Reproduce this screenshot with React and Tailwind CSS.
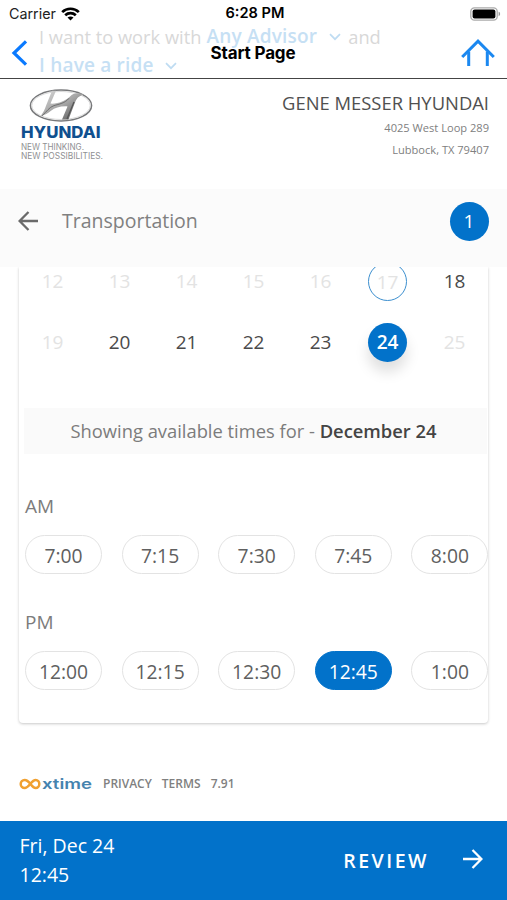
import { useState } from 'react';
import clsx from 'clsx';

const WEEKS = [
  [12, 13, 14, 15, 16, 17, 18],
  [19, 20, 21, 22, 23, 24, 25],
];
const OPEN_DAYS = [18, 20, 21, 22, 23, 24];
const TODAY = 17;

const TIMES = [
  { label: 'AM', slots: ['7:00', '7:15', '7:30', '7:45', '8:00'] },
  { label: 'PM', slots: ['12:00', '12:15', '12:30', '12:45', '1:00'] },
];

function WifiIcon() {
  return (
    <svg width="19" height="14" viewBox="0 0 19 14" fill="none" stroke="#000" strokeWidth="2.7">
      <path d="M1.2 5.1C5.8.6 13.2.6 17.8 5.1" />
      <path d="M4.2 8.3c3-2.8 7.6-2.8 10.6 0" />
      <path d="M9.5 13.6 6.5 10.6c1.7-1.5 4.3-1.5 6 0Z" fill="#000" stroke="none" />
    </svg>
  );
}

function BatteryIcon() {
  return (
    <svg width="31" height="14" viewBox="0 0 31 14">
      <rect x=".8" y=".8" width="26.4" height="12.4" rx="3.6" fill="#fff" stroke="#aaa" strokeWidth="1.3" />
      <rect x="2.6" y="2.5" width="22.8" height="9" rx="2" fill="#000" />
      <path d="M28.6 4.8c2 .6 2 3.8 0 4.4Z" fill="#999" />
    </svg>
  );
}

function ChevronDown() {
  return (
    <svg width="12" height="8" viewBox="0 0 12 8" fill="none" stroke="#bfdcf2" strokeWidth="1.7">
      <path d="m1 1.2 5 5 5-5" />
    </svg>
  );
}

function HomeIcon() {
  return (
    <svg width="34" height="28" viewBox="0 0 34 28" fill="none" stroke="#1b88f0" strokeWidth="3">
      <path d="M1.2 18 17 2.2 32.8 18" />
      <path d="M7.7 12.5V27M26.3 12.5V27" />
    </svg>
  );
}

function HyundaiLogo() {
  return (
    <svg width="86" height="76" viewBox="0 0 86 76">
      <defs>
        <linearGradient id="chrome" x1="0" y1="0" x2="1" y2="1">
          <stop offset="0" stopColor="#d9d9d9" />
          <stop offset=".5" stopColor="#a5a5a5" />
          <stop offset="1" stopColor="#4c4c4c" />
        </linearGradient>
      </defs>
      <ellipse cx="41" cy="17.5" rx="30.6" ry="15.4" fill="#fff" stroke="#77787a" strokeWidth="1.5" />
      <ellipse cx="41" cy="17.5" rx="29.2" ry="14" fill="none" stroke="#c9c9c9" strokeWidth=".7" />
      <path
        d="M32 2.8h4L30.5 15.6c8 .4 15-2.6 19.500-7 3.500-3.400 7.500-4.200 14-2-5 1.400-7.300 3.700-8.800 7.500L48.500 31.600h-6.500l5.500-13.200c-7-.4-12.500 1.400-16.500 4.400-3 2.400-6.300 4.200-10.500 5.400 2.800-3.800 4.400-7 5.600-10.800Z"
        fill="url(#chrome)"
      />
      <path d="M22 27.800c5-4.300 7-8.600 12-10.200 5-1.500 11-2.300 15-7.300" fill="none" stroke="#666" strokeWidth=".9" />
      <path d="m54 14-7 17" stroke="#555" strokeWidth="1.3" />
      <text x="1" y="50" textLength="79.5" lengthAdjust="spacingAndGlyphs" fontFamily="Inter, sans-serif" fontSize="16" fontWeight="800" fill="#10508f">
        HYUNDAI
      </text>
      <text x="1" y="61.5" textLength="63" lengthAdjust="spacingAndGlyphs" fontFamily="Inter, sans-serif" fontSize="8.4" fill="#8f9092">
        NEW THINKING.
      </text>
      <text x="1" y="71" textLength="82" lengthAdjust="spacingAndGlyphs" fontFamily="Inter, sans-serif" fontSize="8.4" fill="#8f9092">
        NEW POSSIBILITIES.
      </text>
    </svg>
  );
}

function XtimeLogo() {
  return (
    <svg width="74" height="20" viewBox="0 0 74 20">
      <path
        d="M11.5 10C9.3 7.2 7.8 6 5.7 6a4 4 0 0 0 0 8c4.5 0 6.5-8 11-8a3.600 4 0 0 1 0 8c-2.100 0-3.200-1.300-5.200-4Z"
        fill="none"
        stroke="#f0a030"
        strokeWidth="2.5"
      />
      <text x="23" y="15" textLength="50" lengthAdjust="spacingAndGlyphs" fontFamily="Inter, sans-serif" fontSize="14.5" fontWeight="600" fill="#4583ae">
        xtime
      </text>
    </svg>
  );
}

function NavHeader() {
  return (
    <header className="relative h-[79px] shrink-0 border-b-[1.5px] border-[#444] font-[Inter,sans-serif]">
      {/* page content showing through the translucent bar */}
      <div className="absolute left-[39px] top-[22px] font-['Open_Sans',sans-serif] text-[18.3px] leading-[29px] text-[#d8d8d8]">
        <div className="flex items-center whitespace-nowrap">
          <span>I want to work with</span>
          <span className="ml-[5px] text-[19px] font-semibold tracking-[0.2px] text-[#c6e0f4]">Any Advisor</span>
          <span className="ml-3 mr-[7px]"><ChevronDown /></span>
          <span>and</span>
        </div>
        <div className="flex items-center text-[19px] font-semibold tracking-[0.2px] text-[#c6e0f4]">
          <span>I have a ride</span>
          <span className="ml-[11px]"><ChevronDown /></span>
        </div>
      </div>
      <div className="relative grid h-[27px] grid-cols-3 items-center pl-[9px] pr-[6px]">
        <div className="flex items-center gap-[5px] text-[14.3px] text-[#222]">
          Carrier <WifiIcon />
        </div>
        <div className="pt-px text-center text-[14.6px] font-semibold text-black">6:28 PM</div>
        <div className="flex justify-end"><BatteryIcon /></div>
      </div>
      <div className="relative grid h-[51px] grid-cols-3 items-center pl-[11px] pr-[12px]">
        <svg width="17" height="26" viewBox="0 0 17 26" fill="none" stroke="#0a7aff" strokeWidth="3.2">
          <path d="M15 1.4 3 13l12 11.6" />
        </svg>
        <h1 className="pt-[2px] text-center text-[17px] font-bold tracking-[-0.15px] text-black">Start Page</h1>
        <div className="flex justify-end"><HomeIcon /></div>
      </div>
    </header>
  );
}

function DealerInfo() {
  return (
    <section className="flex h-[110px] shrink-0 justify-between pl-5 pr-[18px] pt-[9px]">
      <HyundaiLogo />
      <div className="text-right text-[11.1px] leading-[22px] text-[#808080]">
        <h2 className="mb-[3px] pt-[4px] text-[18.4px] text-[#505050]">GENE MESSER HYUNDAI</h2>
        <p>4025 West Loop 289</p>
        <p>Lubbock, TX 79407</p>
      </div>
    </section>
  );
}

function Day({ day, selected, onSelect }) {
  const open = OPEN_DAYS.includes(day);
  return (
    <button
      type="button"
      disabled={!open}
      onClick={() => onSelect(day)}
      className={clsx(
        'flex size-[39px] items-center justify-center rounded-full',
        selected && 'bg-[#0272ca] font-semibold text-white shadow-[0_10px_14px_rgba(0,0,0,0.13)]',
        !selected && open && 'text-[#4a4a4a]',
        !open && 'text-[#e3e3e3]',
        day === TODAY && 'border-[1.5px] border-[#3c8fcf] pt-[2px]'
      )}
    >
      {day}
    </button>
  );
}

function App() {
  const [day, setDay] = useState(24);
  const [time, setTime] = useState('12:45');

  return (
    <div className="flex h-[900px] w-[507px] flex-col overflow-hidden bg-white font-['Open_Sans',sans-serif]">
      <NavHeader />
      <DealerInfo />

      <div className="flex h-[78px] shrink-0 items-center bg-[#fbfbfb] pb-[14px] pl-[18px] pr-[18.5px]">
        <svg width="20" height="20" viewBox="0 0 20 20" fill="none" stroke="#6a6a6a" strokeWidth="2.3">
          <path d="M20 10H2M10.5 1 1.6 10l8.9 9" />
        </svg>
        <span className="ml-6 text-[19.5px] text-[#808080]">Transportation</span>
        <span className="ml-auto flex size-[39px] items-center justify-center rounded-full bg-[#0272ca] text-[19px] text-white">
          1
        </span>
      </div>

      <main className="h-[470px] shrink-0 overflow-hidden px-[19px]">
        <div className="flow-root h-[456px] rounded-b-[4px] bg-white shadow-[0_1px_3px_rgba(0,0,0,0.22)]">
          <div className="-mt-[5px] grid grid-cols-7 justify-items-center gap-y-[22px] text-[19px]">
            {WEEKS.flat().map((d) => (
              <Day key={d} day={d} selected={d === day} onSelect={setDay} />
            ))}
          </div>

          <div className="ml-[5px] mr-px mt-[46px] flex h-[46px] items-center justify-center whitespace-pre bg-[#fafafa] pr-[4px] text-[18.35px] text-[#7c7c7c]">
            Showing available times for - <b className="font-semibold text-[#444]">December {day}</b>
          </div>

          <div className="ml-[6px] mt-[38px] flex flex-col gap-[34px]">
            {TIMES.map(({ label, slots }) => (
              <section key={label}>
                <h3 className="text-[19px] leading-[28px] text-[#7c7c7c]">{label}</h3>
                <div className="mt-[15px] flex gap-[19.6px]">
                  {slots.map((slot) => (
                    <button
                      key={slot}
                      type="button"
                      onClick={() => setTime(slot)}
                      className={clsx(
                        'flex h-[39px] w-[77px] shrink-0 items-center justify-center rounded-full border pt-[3px] text-[19.3px]',
                        slot === time
                          ? 'border-[#0272ca] bg-[#0272ca] text-white'
                          : 'border-[#e3e3e3] text-[#606060]'
                      )}
                    >
                      {slot}
                    </button>
                  ))}
                </div>
              </section>
            ))}
          </div>
        </div>
      </main>

      <footer className="flex h-[84px] shrink-0 items-center gap-[10px] pl-[19px] pt-[9px] text-[12px] font-semibold text-[#808080]">
        <XtimeLogo />
        <span>PRIVACY</span>
        <span>TERMS</span>
        <span>7.91</span>
      </footer>

      <div className="flex h-[79px] shrink-0 items-center bg-[#0272ca] pl-[19.5px] pr-6 text-white">
        <div className="pb-px text-[19.5px] leading-[29px]">
          <p>Fri, Dec {day}</p>
          <p>{time}</p>
        </div>
        <button type="button" className="ml-auto flex items-center gap-[34px] pb-[3px] text-[19.5px] font-semibold tracking-[2.5px]">
          <span className="pt-[3px]">REVIEW</span>
          <svg width="20" height="20" viewBox="0 0 20 20" fill="none" stroke="#fff" strokeWidth="2.3">
            <path d="M0 10h18M9.5 1l8.9 9-8.9 9" />
          </svg>
        </button>
      </div>
    </div>
  );
}

export default App;
